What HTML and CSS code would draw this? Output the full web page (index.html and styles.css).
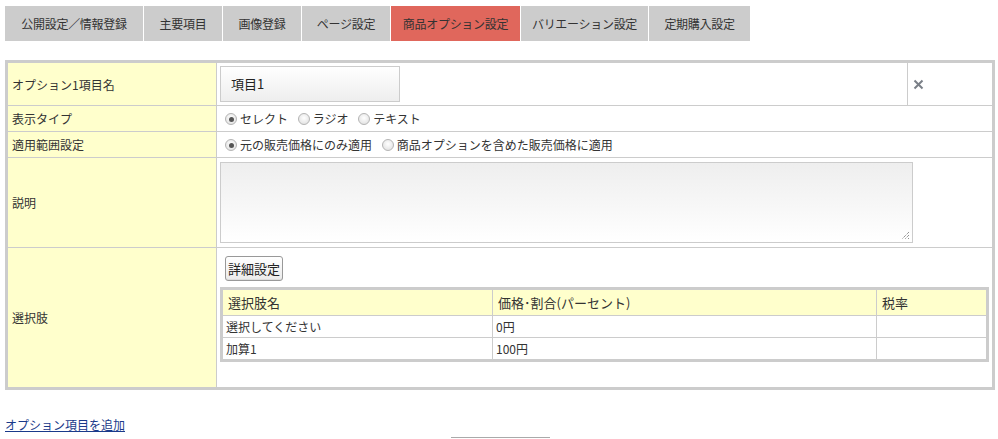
FILE: index.html
```html
<!DOCTYPE html>
<html lang="ja">
<head>
<meta charset="utf-8">
<link rel="stylesheet" href="styles.css">
</head>
<body>
<div class="page">
  <ul class="tabs">
    <li class="tab t1">公開設定／情報登録</li>
    <li class="tab t2">主要項目</li>
    <li class="tab t3">画像登録</li>
    <li class="tab t4">ページ設定</li>
    <li class="tab t5 active">商品オプション設定</li>
    <li class="tab t6">バリエーション設定</li>
    <li class="tab t7">定期購入設定</li>
  </ul>

  <table class="opt">
    <colgroup><col class="c-label"><col class="c-main"><col class="c-del"></colgroup>
    <tr class="r1">
      <th>オプション1項目名</th>
      <td><div class="name-input">項目1</div></td>
      <td class="del"><svg width="11" height="11" viewBox="0 0 11 11"><path d="M1.5 1.5 L9.5 9.5 M9.5 1.5 L1.5 9.5" stroke="#7a7f87" stroke-width="2" fill="none"/></svg></td>
    </tr>
    <tr class="r2">
      <th>表示タイプ</th>
      <td colspan="2">
        <span class="radio on"></span><span class="rl">セレクト</span>
        <span class="radio"></span><span class="rl">ラジオ</span>
        <span class="radio"></span><span class="rl">テキスト</span>
      </td>
    </tr>
    <tr class="r3">
      <th>適用範囲設定</th>
      <td colspan="2">
        <span class="radio on"></span><span class="rl">元の販売価格にのみ適用</span>
        <span class="radio"></span><span class="rl">商品オプションを含めた販売価格に適用</span>
      </td>
    </tr>
    <tr class="r4">
      <th>説明</th>
      <td colspan="2"><div class="desc"><svg class="grip" width="9" height="9" viewBox="0 0 9 9"><path d="M8 1 L1 8 M8 4 L4 8 M8 7 L7 8" stroke="#666" stroke-width="1" stroke-dasharray="1 1" fill="none"/></svg></div></td>
    </tr>
    <tr class="r5">
      <th>選択肢</th>
      <td colspan="2" class="choices">
        <div class="btn">詳細設定</div>
        <table class="sub">
          <colgroup><col class="s1"><col class="s2"><col class="s3"></colgroup>
          <tr class="sh"><th>選択肢名</th><th>価格･割合(パーセント)</th><th>税率</th></tr>
          <tr><td>選択してください</td><td>0円</td><td></td></tr>
          <tr><td>加算1</td><td>100円</td><td></td></tr>
        </table>
      </td>
    </tr>
  </table>

  <a class="add" href="#">オプション項目を追加</a>
  <div class="bottom-btn"></div>
</div>
</body>
</html>
```

FILE: styles.css
```css
html, body {
  margin: 0;
  padding: 0;
  background: #fff;
}
body {
  font-family: "Noto Sans CJK JP", "Liberation Sans", sans-serif;
  font-size: 12px;
  color: #333;
  overflow: hidden;
}
.page {
  padding: 6px 0 0 5px;
}
.tabs {
  list-style: none;
  margin: 0;
  padding: 0;
  display: flex;
  gap: 1px;
}
.tab {
  height: 35px;
  line-height: 35px;
  background: #cccccc;
  text-align: center;
  white-space: nowrap;
  letter-spacing: -0.3px;
}
.t1 { width: 138px; }
.t2 { width: 78px; }
.t3 { width: 78px; }
.t4 { width: 88px; }
.t5 { width: 129px; }
.t6 { width: 127px; }
.t7 { width: 101px; }
.tab.active {
  background: #e0675c;
}

.opt {
  margin-top: 19px;
  width: 990px;
  border-collapse: collapse;
  border: 3px solid #cccccc;
  table-layout: fixed;
}
.c-label { width: 210px; }
.c-del { width: 86px; }
.opt > tbody > tr > th,
.opt > tbody > tr > td {
  border: 1px solid #cccccc;
  padding: 0 0 0 3px;
  vertical-align: middle;
  text-align: left;
  font-weight: normal;
}
.opt > tbody > tr > th {
  background: #ffffcc;
  padding-left: 4px;
}
.r1 th, .r1 td { height: 42px; }
.r2 th, .r2 td { height: 25px; }
.r3 th, .r3 td { height: 25px; }
.r4 th, .r4 td { height: 89px; }
.r5 th { height: 139px; }
.opt td.choices { height: 131px; }

.name-input {
  width: 168px;
  height: 34px;
  line-height: 34px;
  border: 1px solid #cccccc;
  background: linear-gradient(#ffffff, #eeeeee);
  padding-left: 10px;
  font-size: 13px;
  color: #222;
}
.opt td.del {
  padding-left: 5px;
}
.del svg { display: block; }

.radio {
  display: inline-block;
  width: 10px;
  height: 10px;
  border-radius: 50%;
  border: 1px solid #b5b5b5;
  background: radial-gradient(circle at 50% 40%, #ffffff, #dcdcdc);
  vertical-align: -1px;
  margin: 0 3px 0 5px;
  position: relative;
  box-sizing: content-box;
}
.radio.on::after {
  content: "";
  position: absolute;
  left: 2.5px;
  top: 2.5px;
  width: 5px;
  height: 5px;
  border-radius: 50%;
  background: #555;
}
.rl {
  margin-right: 2px;
}

.desc {
  position: relative;
  width: 691px;
  height: 79px;
  border: 1px solid #cccccc;
  background: linear-gradient(#eeeeee, #ffffff);
}
.grip {
  position: absolute;
  right: 2px;
  bottom: 2px;
}

.opt td.choices {
  vertical-align: top;
  padding: 8px 3px 0 3px;
}
.btn {
  display: inline-block;
  margin-left: 5px;
  height: 23px;
  line-height: 23px;
  padding: 0 2px;
  border: 1px solid #999;
  border-radius: 3px;
  background: linear-gradient(#ffffff, #ebebeb);
  box-shadow: inset 0 -1px 0 #ddd;
  font-size: 13px;
  color: #222;
}
.sub {
  margin-top: 6px;
  width: 769px;
  border-collapse: collapse;
  border: 3px solid #cccccc;
  table-layout: fixed;
}
.s1 { width: 271px; }
.s2 { width: 384px; }
.sub th, .sub td {
  border: 1px solid #cccccc;
  height: 21px;
  padding: 0 0 0 3px;
  text-align: left;
  font-weight: normal;
  font-size: 12px;
}
.sub .sh th {
  background: #ffffcc;
  height: 25px;
  padding-left: 5px;
  font-size: 13px;
}

.add {
  display: inline-block;
  margin-top: 26px;
  color: #1a3a8a;
  text-decoration: underline;
  font-size: 12px;
}
.bottom-btn {
  margin: 4px 0 0 446px;
  width: 99px;
  height: 20px;
  border-top: 1px solid #aaa;
}
```
